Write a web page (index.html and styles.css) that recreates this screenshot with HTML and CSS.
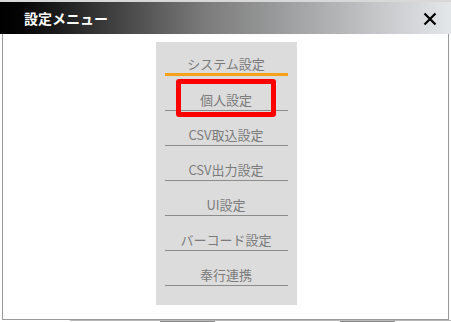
FILE: index.html
```html
<!DOCTYPE html>
<html lang="ja">
  <head>
    <meta charset="UTF-8" />
    <meta name="viewport" content="width=device-width, initial-scale=1.0" />
    <title>設定メニュー</title>
    <link rel="stylesheet" href="styles.css">
  </head>
  <body>
    <div class="dialog">
      <div class="title-bar">
        <span class="title">設定メニュー</span>
        <span class="close">
          <svg width="14" height="14" viewBox="0 0 14 14">
            <path d="M1.5 1.5 L12.5 12.5 M12.5 1.5 L1.5 12.5" stroke="#000" stroke-width="2.2" fill="none" />
          </svg>
        </span>
      </div>

      <div class="content">
        <div class="menu-panel">
          <div class="menu-item active">システム設定</div>
          <div class="menu-item selected">
            個人設定
            <!-- 赤枠で囲む -->
            <span class="highlight"></span>
          </div>
          <div class="menu-item">CSV取込設定</div>
          <div class="menu-item">CSV出力設定</div>
          <div class="menu-item">UI設定</div>
          <div class="menu-item">バーコード設定</div>
          <div class="menu-item">奉行連携</div>
        </div>
      </div>
    </div>

    <!-- ダイアログの後ろのページ -->
    <div class="behind">
      <span class="behind-text one"></span>
      <span class="behind-text two"></span>
    </div>
  </body>
</html>
```

FILE: styles.css
```css
* {
  box-sizing: border-box;
  margin: 0;
  padding: 0;
}

body {
  width: 451px;
  height: 322px;
  overflow: hidden;
  background: #fff;
  font-family: "Noto Sans CJK JP", "Noto Sans", sans-serif;
}

.dialog {
  padding-top: 2px;
  background: linear-gradient(to bottom, #d8d8d8 0, #d8d8d8 2px, #fff 2px);
}

.title-bar {
  height: 32px;
  display: flex;
  align-items: center;
  justify-content: space-between;
  padding: 0 14px 0 24px;
  background: linear-gradient(to right, #000 0%, #050505 5%, #7a7a7a 45%, #b4b5b7 75%, #e4e7ea 100%);
}

.title {
  color: #fff;
  font-size: 14px;
  font-weight: bold;
  letter-spacing: 0;
}

.close {
  display: flex;
  margin-top: 1px;
}

.content {
  height: 286px;
  margin: 0 2px;
  border: 1px solid #9a9a9a;
  border-top: none;
  display: flex;
  justify-content: center;
  padding-top: 8px;
  padding-left: 1px;
}

.menu-panel {
  width: 141px;
  height: 263px;
  background: #dcdcdc;
  padding: 0 9px;
}

.menu-item {
  position: relative;
  height: 35px;
  display: flex;
  align-items: flex-end;
  justify-content: center;
  padding-bottom: 2px;
  line-height: 16px;
  font-size: 13px;
  color: #7b7b7b;
  border-bottom: 1px solid #8c8c8c;
}

.menu-item.active {
  height: 34px;
  padding-bottom: 1px;
  border-bottom: 3px solid #f7a21b;
}

.highlight {
  position: absolute;
  left: 11px;
  top: 3px;
  width: 100px;
  height: 38px;
  border: 5px solid #ff0000;
  border-radius: 3px;
}

.behind {
  display: flex;
  height: 2px;
  margin-left: 70px;
  border-top: 1px solid #b8b8b8;
}

.behind-text {
  height: 1px;
  background: #8a8a8a;
}

.behind-text.one {
  width: 55px;
  margin-left: 90px;
}

.behind-text.two {
  width: 55px;
  margin-left: 125px;
}
```
